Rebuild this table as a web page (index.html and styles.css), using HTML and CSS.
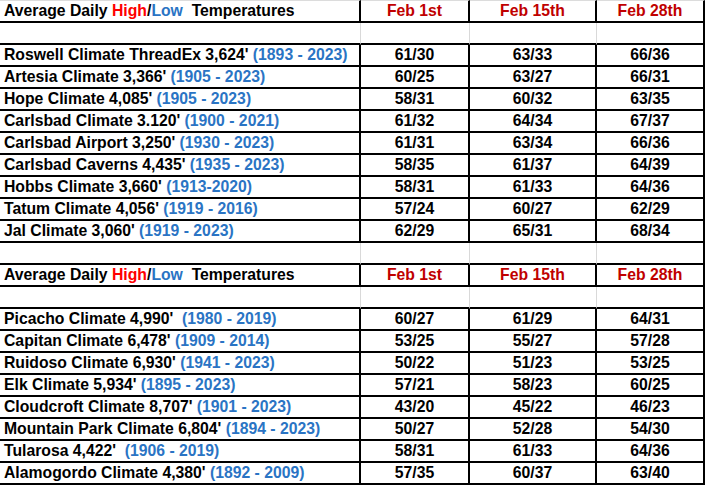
FILE: index.html
```html
<!DOCTYPE html>
<html>
<head>
<meta charset="utf-8">
<link rel="stylesheet" href="styles.css">
</head>
<body>
<table class="sheet">
  <colgroup>
    <col class="c1"><col class="c2"><col class="c3"><col class="c4">
  </colgroup>
  <tbody>
    <tr class="head first">
      <td class="name">Average Daily <span class="hi">High</span>/<span class="lo">Low</span>  Temperatures</td>
      <td class="date">Feb 1st</td><td class="date">Feb 15th</td><td class="date">Feb 28th</td>
    </tr>
    <tr class="blank"><td></td><td></td><td></td><td></td></tr>
    <tr><td class="name">Roswell Climate ThreadEx 3,624' <span class="yr">(1893 - 2023)</span></td><td>61/30</td><td>63/33</td><td>66/36</td></tr>
    <tr><td class="name">Artesia Climate 3,366' <span class="yr">(1905 - 2023)</span></td><td>60/25</td><td>63/27</td><td>66/31</td></tr>
    <tr><td class="name">Hope Climate 4,085' <span class="yr">(1905 - 2023)</span></td><td>58/31</td><td>60/32</td><td>63/35</td></tr>
    <tr><td class="name">Carlsbad Climate 3.120' <span class="yr">(1900 - 2021)</span></td><td>61/32</td><td>64/34</td><td>67/37</td></tr>
    <tr><td class="name">Carlsbad Airport 3,250' <span class="yr">(1930 - 2023)</span></td><td>61/31</td><td>63/34</td><td>66/36</td></tr>
    <tr><td class="name">Carlsbad Caverns 4,435' <span class="yr">(1935 - 2023)</span></td><td>58/35</td><td>61/37</td><td>64/39</td></tr>
    <tr><td class="name">Hobbs Climate 3,660' <span class="yr">(1913-2020)</span></td><td>58/31</td><td>61/33</td><td>64/36</td></tr>
    <tr><td class="name">Tatum Climate 4,056' <span class="yr">(1919 - 2016)</span></td><td>57/24</td><td>60/27</td><td>62/29</td></tr>
    <tr><td class="name">Jal Climate 3,060' <span class="yr">(1919 - 2023)</span></td><td>62/29</td><td>65/31</td><td>68/34</td></tr>
    <tr class="blank"><td></td><td></td><td></td><td></td></tr>
    <tr class="head">
      <td class="name">Average Daily <span class="hi">High</span>/<span class="lo">Low</span>  Temperatures</td>
      <td class="date">Feb 1st</td><td class="date">Feb 15th</td><td class="date">Feb 28th</td>
    </tr>
    <tr class="blank"><td></td><td></td><td></td><td></td></tr>
    <tr><td class="name">Picacho Climate 4,990'  <span class="yr">(1980 - 2019)</span></td><td>60/27</td><td>61/29</td><td>64/31</td></tr>
    <tr><td class="name">Capitan Climate 6,478' <span class="yr">(1909 - 2014)</span></td><td>53/25</td><td>55/27</td><td>57/28</td></tr>
    <tr><td class="name">Ruidoso Climate 6,930' <span class="yr">(1941 - 2023)</span></td><td>50/22</td><td>51/23</td><td>53/25</td></tr>
    <tr><td class="name">Elk Climate 5,934' <span class="yr">(1895 - 2023)</span></td><td>57/21</td><td>58/23</td><td>60/25</td></tr>
    <tr><td class="name">Cloudcroft Climate 8,707' <span class="yr">(1901 - 2023)</span></td><td>43/20</td><td>45/22</td><td>46/23</td></tr>
    <tr><td class="name">Mountain Park Climate 6,804' <span class="yr">(1894 - 2023)</span></td><td>50/27</td><td>52/28</td><td>54/30</td></tr>
    <tr><td class="name">Tularosa 4,422'  <span class="yr">(1906 - 2019)</span></td><td>58/31</td><td>61/33</td><td>64/36</td></tr>
    <tr><td class="name">Alamogordo Climate 4,380' <span class="yr">(1892 - 2009)</span></td><td>57/35</td><td>60/37</td><td>63/40</td></tr>
  </tbody>
</table>
</body>
</html>
```
FILE: styles.css
```css
html, body {
  margin: 0;
  padding: 0;
  background: #ffffff;
}

.sheet {
  border-collapse: separate;
  border-spacing: 0;
  table-layout: fixed;
  width: 705px;
  font-family: "Liberation Sans", Arial, sans-serif;
  font-weight: bold;
  font-size: 15.75px;
  color: #000000;
}

.c1 { width: 361px; }
.c2 { width: 109px; }
.c3 { width: 127px; }
.c4 { width: 108px; }

.sheet td {
  height: 20px;
  padding: 0;
  border-right: 2px solid #000000;
  border-bottom: 2px solid #000000;
  text-align: center;
  vertical-align: middle;
  line-height: 20px;
  white-space: pre;
  overflow: hidden;
}

.first td {
  border-top: 1px solid #dcdcdc;
}

.sheet td.name {
  text-align: left;
  padding-left: 4px;
}

.blank td {
  border-right: 1px solid #d9d9d9;
  padding-right: 1px;
}

.blank td:last-child {
  border-right: 2px solid #000000;
  padding-right: 0;
}

.hi { color: #ff0000; }
.lo { color: #2a74c4; }
.yr { color: #2a74c4; }
.date { color: #c00000; }
```
